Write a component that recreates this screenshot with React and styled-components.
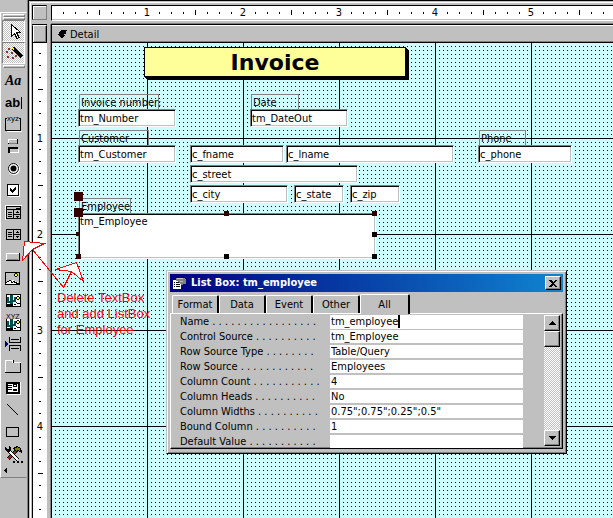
import React, { useEffect, useState } from "react";
import styled, { createGlobalStyle } from "styled-components";

const face = "#c0c0c0";
const shade = "#808080";
const checker = `repeating-conic-gradient(#fff 0 25%, ${face} 0 50%) 0 0 / 2px 2px`;
const uiFont = `"DejaVu Sans Condensed", "DejaVu Sans", sans-serif`;

const GlobalStyle = createGlobalStyle`
  * { box-sizing: border-box; }
  body { margin: 0; overflow: hidden; }
  button, input, textarea { font: inherit; color: inherit; border-radius: 0; }
  body { font-family: ${uiFont}; font-stretch: condensed; font-size: 11px; color: #000; }
`;

const Page = styled.div`
  position: relative;
  display: flex;
  height: 100vh;
  background: ${face};
  overflow: hidden;
`;

const Side = styled.aside`
  flex: none;
  width: 28px;
  padding-top: 12px;
  border-right: 1px solid ${shade};
`;

const ToolBar = styled.div`
  display: flex;
  flex-direction: column;
  align-items: center;
  padding: 1px 0;
  border: 1px solid;
  border-color: #fff ${face} ${shade} #fff;
`;

const Grip = styled.div`
  flex: none;
  width: 22px;
  height: 3px;
  margin: ${(p) => (p.$last ? "1px 0" : "0")};
  border: 1px solid;
  border-color: #fff ${shade} ${shade} #fff;
`;

const ToolButton = styled.button`
  flex: none;
  display: block;
  width: 23px;
  height: 22px;
  padding: 0;
  border: 1px solid;
  border-color: ${(p) => (p.$pressed ? `${shade} #fff #fff ${shade}` : "transparent")};
  background: ${(p) => (p.$pressed ? checker : "transparent")};
  svg { display: block; margin: -1px 0 0 -1px; }
`;

const MoreButton = styled.button`
  align-self: flex-start;
  height: 11px;
  padding: 0 2px;
  border: 0;
  background: transparent;
  svg { display: block; }
`;

const Workspace = styled.main`
  flex: 1;
  min-width: 0;
  display: grid;
  grid-template-columns: 15px minmax(0, 1fr);
  grid-template-rows: 16px minmax(0, 1fr);
  gap: 3px 4px;
  padding: 4px 0 0 3px;
  border-left: 1px solid #000;
  border-top: 1px solid #000;
  box-shadow: inset 1px 1px ${face}, inset 2px 2px #fff;
`;

const Corner = styled.div`
  height: 15px;
  border: 1px solid;
  border-color: #000 ${shade} ${shade} #000;
  box-shadow: inset 1px 1px #fff;
`;

const TopRuler = styled.div`
  display: flex;
  padding-left: 5px;
  overflow: hidden;
  border-left: 1px solid #000;
  border-top: 1px solid #000;
  border-bottom: 1px solid #fff;
  background: #fff;
  box-shadow: inset 0 -1px ${face};
`;

const SideRuler = styled.div`
  flex: 1;
  min-height: 0;
  padding-top: 5px;
  overflow: hidden;
  border-left: 1px solid #000;
  background: #fff;
`;

const TopMark = styled.div`
  flex: none;
  width: 12px;
  height: 13px;
  line-height: 14px;
  text-align: center;
  background: linear-gradient(#000, #000) 6px center / 1px ${(p) => p.$size}px no-repeat;
`;

const SideMark = styled.div`
  width: 14px;
  height: 12px;
  line-height: 14px;
  text-align: center;
  background: linear-gradient(#000, #000) center 5px / ${(p) => p.$size}px 1px no-repeat;
`;

const Column = styled.div`
  display: flex;
  flex-direction: column;
  min-height: 0;
  border-top: 1px solid #000;
`;

const Section = styled(Column)`
  border-left: 1px solid #000;
  box-shadow: -1px 0 ${shade}, 0 -1px ${shade};
`;

const Selector = styled.button`
  flex: none;
  width: 15px;
  height: 18px;
  padding: 0;
  border: 1px solid;
  border-color: #fff #000 #000 #000;
  background: ${face};
  box-shadow: inset 1px 0 #fff, inset -1px -1px ${shade};
`;

const SectionHead = styled.button`
  flex: none;
  display: flex;
  align-items: center;
  gap: 3px;
  height: 18px;
  padding: 0 5px;
  border: 0;
  border-top: 1px solid #fff;
  border-bottom: 1px solid #000;
  background: ${face};
  box-shadow: inset 0 -1px ${shade};
`;

const Canvas = styled.div`
  position: relative;
  flex: 1;
  min-height: 0;
  overflow: hidden;
  background:
    repeating-linear-gradient(90deg, transparent 0 95px, #000 95px 96px),
    repeating-linear-gradient(180deg, transparent 0 95px, #000 95px 96px),
    conic-gradient(from 90deg at 3px 3px, #000 25%, transparent 0) 0 0 / 4px 4px,
    #cff;
`;

/* Anything placed freely on the design surface */
const Item = styled.div`
  position: absolute;
  left: ${(p) => p.$x}px;
  top: ${(p) => p.$y}px;
  width: ${(p) => p.$w}px;
  height: ${(p) => p.$h}px;
`;

const Title = styled(Item).attrs({ as: "h1" })`
  margin: 0;
  border: 1px solid #000;
  background: #ff9;
  box-shadow: 1px 1px #000, 2px 2px #000, 3px 3px #000;
  font: bold 22px/30px "DejaVu Sans", sans-serif;
  font-stretch: normal;
  text-align: center;
`;

const Caption = styled(Item).attrs({ as: "label" })`
  padding-left: 1px;
  border: 1px solid ${shade};
  line-height: 16px;
  white-space: nowrap;
`;

const Field = styled(Item)`
  display: block;
  padding: 0 0 0 1px;
  border: 1px solid;
  border-color: ${shade} #fff #fff ${shade};
  background: #fff;
  box-shadow: inset 1px 1px #000, inset -1px -1px ${face};
  line-height: 16px;
  outline: 0;
  resize: none;
  overflow: hidden;
`;

const Handle = styled(Item)`
  background: ${(p) => (p.$dark ? "#300" : "#000")};
`;

const Note = styled.p`
  position: absolute;
  left: 57px;
  top: 290px;
  margin: 0;
  color: #f00;
  font: 13px/16px "Liberation Sans", sans-serif;
  white-space: pre;
`;

const Arrows = styled.svg`
  position: absolute;
  left: 0;
  top: 0;
  pointer-events: none;
`;

const Dialog = styled.section`
  position: absolute;
  left: 166px;
  top: 270px;
  width: 401px;
  padding: 3px 3px 4px;
  background: ${face};
  border: 1px solid;
  border-color: ${face} #000 #000 ${face};
  box-shadow: inset 1px 1px #fff, inset -1px -1px ${shade};
`;

const TitleBar = styled.header`
  display: flex;
  align-items: center;
  gap: 5px;
  height: 18px;
  padding: 0 2px;
  background: linear-gradient(90deg, #000080, #1084d0);
  color: #fff;
  h2 { flex: 1; margin: 0; font-size: 11px; line-height: 18px; }
`;

const RaisedButton = styled.button`
  flex: none;
  display: flex;
  align-items: center;
  justify-content: center;
  width: 16px;
  height: ${(p) => p.$h}px;
  padding: 0;
  border: 1px solid;
  border-color: #fff #000 #000 #fff;
  background: ${face};
  box-shadow: inset -1px -1px ${shade};
`;

const Tabs = styled.div`
  display: flex;
  align-items: flex-end;
  height: 21px;
  padding-left: 2px;
`;

const Tab = styled.button`
  width: ${(p) => (p.$active ? 50 : 47)}px;
  height: ${(p) => (p.$active ? 20 : 18)}px;
  padding: 0;
  border: solid;
  border-width: 1px 2px 0 1px;
  border-color: #fff #000 #000 #fff;
  border-radius: 2px 2px 0 0;
  background: ${face};
  ${(p) => p.$active && "position: relative; margin-bottom: -1px;"}
`;

const Panel = styled.div`
  display: flex;
  justify-content: space-between;
  padding: 1px 2px 0 9px;
  border: 1px solid;
  border-color: #fff #000 #000 #fff;
  box-shadow: inset -1px -1px ${shade};
`;

const Props = styled.div`
  display: grid;
  gap: 2px;
  width: 343px;
`;

const PropRow = styled.div`
  display: grid;
  grid-template-columns: 150px 1fr;
  height: 13px;
  line-height: 14px;
  label { white-space: nowrap; }
  input {
    width: 100%;
    height: 13px;
    padding: 0 0 0 1px;
    border: 0;
    background: #fff;
    outline: 0;
  }
`;

const EditedValue = styled.div`
  display: flex;
  background: #fff;
  input { width: 70px; border-right: 2px solid #000; }
`;

const ScrollBar = styled.div`
  display: flex;
  flex-direction: column;
  justify-content: space-between;
  width: 16px;
  margin-bottom: 2px;
  background: ${checker};
`;

const Glyph = ({ children, w = 23, h = 22 }) => (
  <svg width={w} height={h} viewBox={`0 0 ${w} ${h}`} shapeRendering="crispEdges" fill="none" aria-hidden="true">
    {children}
  </svg>
);

const serifItalic = { fontFamily: "Liberation Serif, serif", fontStyle: "italic", fontWeight: "bold", fontSize: 14 };

/* Framed cactus and sun shared by the two object tools */
const Cactus = ({ y }) => (
  <g transform={`translate(0 ${y})`}>
    <path d="M4 1h15v13H4z" fill="#fff" />
    <path d="M8 2h3v9H8zM5 4h2v4h1v2H5zM12 4h2v5h-3V7h1z" fill="#005050" />
    <path d="M4 1h15v13H4zM5 2v11h13V2z" fill="#000" fillRule="evenodd" />
    <path d="M4 11h7v3H4zM12 11h2v1h-2zM15 10h3v1h-3zM14 9h1v1h-1zM15 3h2v1h1v2h-1v1h-2V6h-1V4h1z" fill="#000" />
    <path d="M15 4h2v2h-2z" fill="#ff0" />
  </g>
);

const tools = [
  ["Select Objects", <path d="M9.500 4.500v12l3-3 2.500 5 2-1-2.500-5h4z" fill="#fff" stroke="#000" />, true],
  ["Control Wizards", <><path d="M11 6l9 9" stroke="#000" strokeWidth="3" /><path d="M9 5h2v1h1v2h-1V7h-1V6H9z" fill="#ff0" /><path d="M6 6h2v2H6zM4 9h2v2H4zM9 10h2v2H9zM5 14h2v2H5zM10 15h2v2h-2zM13 13h2v2h-2z" fill="#903030" /></>, true],
  ["Label", <text x="3" y="16" fill="#000" {...serifItalic}>Aa</text>],
  ["Text Box", <><text x="3" y="16" fill="#000" fontSize="13" fontWeight="bold" fontFamily="Liberation Sans, sans-serif">ab</text><path d="M19.500 6v12" stroke="#000" /></>],
  ["Option Group", <><path d="M5 5.500H3.500v12h15v-12H17" stroke="#000" /><path d="M5 18.500h15" stroke="#fff" /><text x="5" y="8" fill="#000" fontSize="8" fontFamily="Liberation Sans, sans-serif">xyz</text></>],
  ["Toggle Button", <><path d="M6.500 9V4.500h8" stroke="#fff" /><path d="M6 9h10V4h-1v4H6z" fill="#000" /><path d="M7 8.500h8" stroke={shade} /><path d="M6 12h10v2H8v4H6z" fill="#000" /><path d="M8 17.500h8.500V14" stroke="#fff" /></>],
  ["Option Button", <g shapeRendering="auto"><circle cx="12" cy="12" r="6" fill="#fff" /><circle cx="11.500" cy="11.500" r="5" fill="#fff" stroke="#000" /><circle cx="11.500" cy="11.500" r="3" fill="#000" /></g>],
  ["Check Box", <><path d="M5.500 5.500h11v11h-11z" fill="#fff" stroke="#000" /><path d="M17.500 6v11.500H6" stroke="#fff" /><path d="M8 9h1v1h1v1h1v-1h1V9h1V8h1v3h-1v1h-1v1h-1v1h-1v-1H9v-1H8z" fill="#000" /></>],
  ["Combo Box", <><path d="M4.500 5.500h14v3h-14zM4.500 8.500v9h14v-9M11.500 9v9M6 11.500h4M6 13.500h4M6 15.500h4M12 13.500h6" stroke="#000" /><path d="M14 7h4v1h-1v1h-2V8h-1zM15 10h1v1h1v1h-3v-1h1zM14 15h3v1h-1v1h-1v-1h-1z" fill="#000" /><path d="M3.500 19V4.500h16" stroke="#fff" /></>],
  ["List Box", <><path d="M4.500 6.500h14v10h-14zM11.500 6v11M6 9.500h4M6 11.500h4M6 13.500h4M12 11.500h6" stroke="#000" /><path d="M15 8h1v1h1v1h-3V9h1zM14 13h3v1h-1v1h-1v-1h-1z" fill="#000" /></>],
  ["Command Button", <><path d="M4.500 15V8.500h12" stroke="#fff" /><path d="M4 15.500h13V8" stroke="#000" /><path d="M5 14.500h11" stroke={shade} /></>],
  ["Image", <><path d="M3.500 5.500h14v12h-14z" fill={face} stroke="#000" /><path d="M4 15h1v-1h2v-1h2v1h1v-1h2v1h2v1h2v1h1v1H4z" fill="#fff" /><path d="M4 15h1v-1h2v-1h2v1h1v1h1v-1h2v1h2v1h2v1h-3v-1h-2v-1h-1v1h-2v-1H9v-1H7v1H5v1H4zM13 6h2v1h1v2h-1v1h-2V9h-1V7h1z" fill="#000" /><path d="M13 7h2v2h-2z" fill="#ff0" /></>],
  ["Unbound Object", <Cactus y={4} />],
  ["Bound Object", <><Cactus y={6} /><path d="M4 3h15v5H4z" fill={face} /><text x="4" y="8" fill="#000" fontSize="7" fontFamily="Liberation Sans, sans-serif">XYZ</text></>],
  ["Page Break", <><path d="M3 8l3 3-3 3z" fill="#000080" /><path d="M7.500 4v5.500h11V4M7.500 18v-5.500h11V18M9 6.500h8M9 15.500h8" stroke="#000" /></>],
  ["Tab Control", <><path d="M3.500 17V5.500h7v2h8" stroke="#fff" /><path d="M3 17.500h15.500V8M11.500 5v3" stroke="#000" /></>],
  ["Subform", <><path d="M4 5h14v12H4z" fill="#000" /><path d="M6 7h10v8H6z" fill="#fff" /><path d="M6 8.500h4M6 10.500h4M6 12.500h4M11.500 7.500h3v2h-3zM11.500 12.500h3v1h-3z" stroke="#000" /><path d="M19 5v13H5v-1h13V5z" fill="#fff" /></>],
  ["Line", <path d="M5 5l11 11" stroke="#000" />],
  ["Rectangle", <path d="M4.500 6.500h12v9h-12z" stroke="#000" />],
  ["More Controls", <><path d="M6 16L15 7" stroke="#000" strokeWidth="4" /><path d="M6 16L15 7" stroke="#a02020" strokeWidth="2" /><path d="M7 8l9 9" stroke="#000" strokeWidth="4" /><path d="M8 9l8 8" stroke="#fff" strokeWidth="2" /><path d="M3 4v3l2 2h2l2-2V5L7 3v3H5z" fill="#000" /><path d="M11.500 5.500l4-2 3 2 1 4-3-2-2 1z" fill="#808000" stroke="#000" /><path d="M11 18h2v2h-2zM15 18h2v2h-2zM19 18h2v2h-2z" fill="#000" /></>],
];

/* Ruler: one mark each eighth of an inch, at 96 pixels to the inch */
const STEP = 12;
const makeMarks = (length) =>
  Array.from({ length: Math.max(0, Math.floor(length / STEP)) }, (_, i) => {
    const n = i + 1;
    return n % 8 === 0 ? { label: n / 8, size: 0 } : { label: "", size: n % 4 === 0 ? 5 : 2 };
  });

function useWindowSize() {
  const read = () => ({ width: window.innerWidth, height: window.innerHeight });
  const [size, setSize] = useState(read);
  useEffect(() => {
    const onResize = () => setSize(read());
    window.addEventListener("resize", onResize);
    return () => window.removeEventListener("resize", onResize);
  }, []);
  return size;
}

const captions = [
  ["Invoice number:", "tm_Number", 27, 51, 80],
  ["Date", "tm_DateOut", 199, 51, 48],
  ["Customer", "tm_Customer", 27, 87, 70],
  ["Phone", "c_phone", 427, 87, 47],
];

const fields = [
  ["tm_Number", 26, 66, 98],
  ["tm_DateOut", 198, 66, 98],
  ["tm_Customer", 26, 102, 98],
  ["c_fname", 138, 102, 94],
  ["c_lname", 234, 102, 168],
  ["c_phone", 426, 102, 94],
  ["c_street", 138, 122, 168],
  ["c_city", 138, 142, 98],
  ["c_state", 242, 142, 50],
  ["c_zip", 298, 142, 50],
];

const handles = [
  [22, 149, 9, true], [22, 165, 9, true], [24, 189, 4, true], [24, 211, 5, true],
  [172, 168, 5, true], [320, 168, 5, true], [320, 189, 5], [320, 211, 5], [172, 211, 5],
];

const properties = [
  ["Name", 17, "tm_employee"],
  ["Control Source", 10, "tm_Employee"],
  ["Row Source Type", 8, "Table/Query"],
  ["Row Source", 12, "Employees"],
  ["Column Count", 11, "4"],
  ["Column Heads", 10, "No"],
  ["Column Widths", 10, '0.75";0.75";0.25";0.5"'],
  ["Bound Column", 10, "1"],
  ["Default Value", 11, ""],
];

function Toolbox() {
  return (
    <Side>
      <ToolBar role="toolbar" aria-label="Toolbox">
        <Grip />
        <Grip />
        {tools.map(([name, art, pressed], i) => (
          <React.Fragment key={name}>
            {i === 2 && <Grip $last />}
            <ToolButton type="button" aria-label={name} $pressed={pressed}>
              <Glyph>{art}</Glyph>
            </ToolButton>
          </React.Fragment>
        ))}
        <MoreButton type="button" aria-label="More buttons">
          <Glyph w={5} h={7}><path d="M4 1v5L1 3.500z" fill="#000" /></Glyph>
        </MoreButton>
      </ToolBar>
    </Side>
  );
}

function DesignSurface() {
  return (
    <Canvas>
      <Title $x={92} $y={4} $w={262} $h={30}>Invoice</Title>
      {captions.map(([text, id, x, y, w]) => (
        <Caption key={text} htmlFor={id} $x={x} $y={y} $w={w} $h={16}>{text}</Caption>
      ))}
      {fields.map(([name, x, y, w]) => (
        <Field as="input" key={name} id={name} aria-label={name} defaultValue={name} $x={x} $y={y} $w={w} $h={18} />
      ))}
      <Caption htmlFor="tm_Employee" $x={27} $y={155} $w={52} $h={16}>Employee</Caption>
      <Field as="textarea" id="tm_Employee" defaultValue="tm_Employee" $x={26} $y={170} $w={298} $h={46} />
      {handles.map(([x, y, size, dark]) => (
        <Handle key={`${x}-${y}`} $x={x} $y={y} $w={size} $h={size} $dark={dark} />
      ))}
    </Canvas>
  );
}

function PropertySheet() {
  return (
    <Dialog aria-label="List Box: tm_employee">
      <TitleBar>
        <Glyph w={14} h={14}>
          <path d="M1 4h8v9H1z" fill="#fff" />
          <path d="M2 6.500h1M4 6.500h4M2 8.500h1M4 8.500h4M2 10.500h1M4 10.500h4" stroke="#000" />
          <path d="M4 2h7l3 1v5h-3v1H9L7 6 4 5z" fill={shade} />
          <path d="M5 2.500h6M8 5.500h3" stroke={face} />
        </Glyph>
        <h2>List Box: tm_employee</h2>
        <RaisedButton type="button" aria-label="Close" $h={14}>
          <Glyph w={8} h={7}><path d="M0 0h2l2 2 2-2h2L5 3.500 8 7H6L4 5 2 7H0l3-3.500z" fill="#000" /></Glyph>
        </RaisedButton>
      </TitleBar>
      <Tabs role="tablist">
        {["Format", "Data", "Event", "Other", "All"].map((t) => (
          <Tab key={t} type="button" role="tab" aria-selected={t === "All"} $active={t === "All"}>{t}</Tab>
        ))}
      </Tabs>
      <Panel>
        <Props>
          {properties.map(([name, dots, value], i) => {
            const id = `prop-${i}`;
            const input = <input id={id} defaultValue={value} />;
            return (
              <PropRow key={name}>
                <label htmlFor={id}>{name + " .".repeat(dots)}</label>
                {i === 0 ? <EditedValue>{input}</EditedValue> : input}
              </PropRow>
            );
          })}
        </Props>
        <ScrollBar>
          <div>
            <RaisedButton type="button" aria-label="Scroll up" $h={16}>
              <Glyph w={7} h={4}><path d="M3 0h1v1h1v1h1v1h1v1H0V3h1V2h1V1h1z" fill="#000" /></Glyph>
            </RaisedButton>
            <RaisedButton type="button" aria-label="Scroll thumb" $h={16} />
          </div>
          <RaisedButton type="button" aria-label="Scroll down" $h={16}>
            <Glyph w={7} h={4}><path d="M0 0h7v1H6v1H5v1H4v1H3V3H2V2H1V1H0z" fill="#000" /></Glyph>
          </RaisedButton>
        </ScrollBar>
      </Panel>
    </Dialog>
  );
}

export default function App() {
  const { width, height } = useWindowSize();
  return (
    <Page>
      <GlobalStyle />
      <Toolbox />
      <Workspace>
        <Corner />
        <TopRuler>
          {makeMarks(width - 57).map((m, i) => <TopMark key={i} $size={m.size}>{m.label}</TopMark>)}
        </TopRuler>
        <Column>
          <Selector type="button" aria-label="Select section" />
          <SideRuler>
            {makeMarks(height - 48).map((m, i) => <SideMark key={i} $size={m.size}>{m.label}</SideMark>)}
          </SideRuler>
        </Column>
        <Section>
          <SectionHead type="button">
            <Glyph w={10} h={8}><path d="M4 0h6L8 2h1v2H7v1h1L5 8 0 4h2V2h1z" fill="#000" /></Glyph>
            Detail
          </SectionHead>
          <DesignSurface />
        </Section>
      </Workspace>
      <Note>{"Delete TextBox\nand add ListBox\nfor Employee"}</Note>
      <Arrows width="100" height="300" viewBox="0 0 100 300" shapeRendering="crispEdges" aria-hidden="true">
        <g stroke="#f00" fill="#fff">
          <path d="M24.500 241.500L44.500 243.500L32.500 249.500L22.500 260.500Z" />
          <path d="M55.500 269.500L76.500 262.500L83.500 281.500L71.500 271.500Z" />
          <path d="M32.500 249.500L63.500 287.500L71.500 271.500" fill="none" />
        </g>
      </Arrows>
      <PropertySheet />
    </Page>
  );
}
